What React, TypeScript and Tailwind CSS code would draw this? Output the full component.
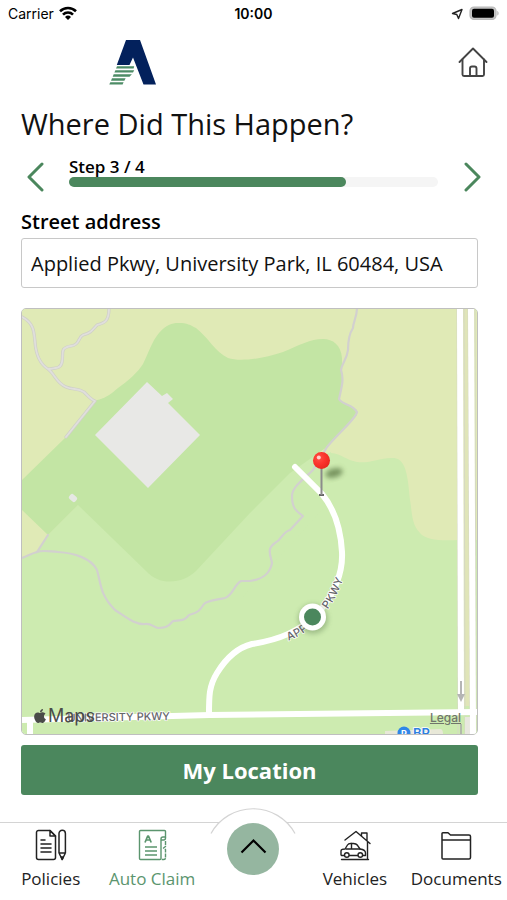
import React from 'react';
import { FaApple } from 'react-icons/fa';

const StatusBar: React.FC = () => {
  return (
    <div className="grid grid-cols-3 items-center h-7 px-2 font-['Inter',sans-serif] text-black">
      <div className="flex items-center gap-1">
        <span className="text-sm leading-5">Carrier</span>
        <svg className="w-5 h-4" viewBox="0 0 20 16" fill="none" stroke="#000" strokeWidth="2.600">
          <path d="M2 5.200a11.500 11.500 0 0 1 16 0" />
          <path d="M5 8.600a7 7 0 0 1 10 0" />
          <path d="M10 14l-3-3a4.300 4.300 0 0 1 6 0z" fill="#000" stroke="none" />
        </svg>
      </div>
      <span className="text-center text-sm leading-5 font-semibold">10:00</span>
      <div className="flex items-center justify-end gap-1">
        <svg className="w-4 h-4" viewBox="0 0 16 16" fill="none" stroke="#222" strokeWidth="1.4" strokeLinejoin="round">
          <path d="M5.500 7.500L15 3.500 11.500 12.500 9.800 8.500z" />
        </svg>
        <svg className="w-8 h-4" viewBox="0 0 32 16">
          <rect x="3" y="1" width="26" height="12.500" rx="4" fill="#c4c4c4" stroke="#b8b8b8" strokeWidth="1.200" />
          <rect x="5" y="2.700" width="22" height="9" rx="2" fill="#000" />
          <path d="M30.300 5c1.700.7 1.700 4 0 4.600z" fill="#b5b5b5" />
        </svg>
      </div>
    </div>
  );
};

const Logo: React.FC = () => {
  return (
    <svg className="w-12 h-12" viewBox="0 0 48 48" role="img" aria-label="Applied">
      <path d="M17 2h14l16 44.500H34.500L24 19.500 20.500 27H7.800z" fill="#03215c" />
      <g fill="#4d8c66">
        <path d="M8 28.200h17.200l-.6 2.200H7z" />
        <path d="M6.400 32.200h18.800l-1.200 2.400H5.400z" />
        <path d="M4.700 36.300h18.200l-2.400 2.400H3.700z" />
        <path d="M3 40.300h13.600l-1.200 2.400H2z" />
        <path d="M1.300 44.200h13.300l-1 2.400H.3z" />
      </g>
    </svg>
  );
};

const Header: React.FC = () => {
  return (
    <header className="flex items-center justify-between h-[68px] pl-[109px] pr-[18px]">
      <Logo />
      <button type="button" aria-label="Home">
        <svg className="w-8 h-8" viewBox="0 0 32 32" fill="none" stroke="#444" strokeWidth="1.900" strokeLinecap="round" strokeLinejoin="round">
          <path d="M2.500 16L16 2.500 29.500 16" />
          <path d="M5.500 13.500V28.500a1.500 1.500 0 0 0 1.500 1.500H25.500a1.500 1.500 0 0 0 1.500-1.500V13.500" />
          <path d="M13 30v-7.500a2 2 0 0 1 2-2h2.500a2 2 0 0 1 2 2V30" />
        </svg>
      </button>
    </header>
  );
};

const StepProgress: React.FC = () => {
  return (
    <div className="flex items-center justify-between -mr-2 pt-4">
      <button type="button" aria-label="Previous step" className="w-7 shrink-0">
        <svg className="w-7 h-8" viewBox="0 0 28 32" fill="none" stroke="#4b875d" strokeWidth="3" strokeLinecap="round" strokeLinejoin="round">
          <path d="M21 4L8 17l13 13" />
        </svg>
      </button>
      <div className="flex-1 ml-5 mr-5 -mt-2">
        <p id="step-label" className="text-[17px] leading-5 font-semibold text-black">Step 3 / 4</p>
        <div
          role="progressbar"
          aria-labelledby="step-label"
          aria-valuenow={3}
          aria-valuemax={4}
          className="h-[10px] rounded-full bg-[#f5f5f5]"
        >
          <div className="h-full w-3/4 rounded-full bg-[#4b875d]" />
        </div>
      </div>
      <button type="button" aria-label="Next step" className="w-7 shrink-0">
        <svg className="w-7 h-8" viewBox="0 0 28 32" fill="none" stroke="#4b875d" strokeWidth="3" strokeLinecap="round" strokeLinejoin="round">
          <path d="M8 4l13 13L8 30" />
        </svg>
      </button>
    </div>
  );
};

const MapView: React.FC = () => {
  return (
    <div className="relative overflow-hidden rounded-[5px] border border-[#bfbfbf]">
      <svg className="block w-full h-auto" viewBox="22 309 455 425" role="img" aria-label="Map of the incident location">
        <defs>
          <path id="applied-pkwy" d="M287 637C306 630 328 612 341 574" />
          <radialGradient id="pin-head" cx="0.35" cy="0.35" r="0.7">
            <stop offset="0" stopColor="#ff5348" />
            <stop offset="0.5" stopColor="#fc352d" />
            <stop offset="1" stopColor="#e8281f" />
          </radialGradient>
          <filter id="soft" x="-50%" y="-50%" width="200%" height="200%">
            <feGaussianBlur stdDeviation="2.500" />
          </filter>
        </defs>

        {/* land */}
        <rect x="22" y="309" width="455" height="425" fill="#cdebb0" />
        <path
          d="M22 309H477V540H458C440 541 426 540 420 533C411 524 412 510 410 500C408 480 407 459 394 458C380 457 370 464 357 462C346 460 342 454 331 453L200 480L22 560Z"
          fill="#e0eab6"
        />
        <path d="M22 559C30 554 34 553 37 552L48 535L78 505L290 473L331 452L331 500L240 600L60 600L22 600Z" fill="#cdebb0" />
        <path
          d="M22 480L66 437L95 401C102 398 104 400 118 388C128 381 138 372 143 364C149 352 152 341 159 333C166 325 172 323 178 323C188 323 190 325 196 328C208 337 215 352 228 358C240 362 262 359 283 352C300 345 310 339 323 339C333 339 341 345 342 358L342 370L343 383L339 400L357 410V415L327 447L290 473L250 513L196 571C184 583 160 587 146 571L78 505L48 535L22 510Z"
          fill="#c3e5a4"
        />

        {/* buildings */}
        <path d="M147 382L162 396L167 393L173 399L168 403L200 435L148 488L95 435Z" fill="#e8e8e6" />
        <rect x="69" y="495" width="8" height="6" rx="2" transform="rotate(42 73 498)" fill="#e6e8e4" />
        <path d="M385 731L440 729Q443 729 443 734H385Z" fill="#e8e8d8" />

        {/* trails */}
        <g fill="none" strokeLinejoin="round" strokeLinecap="round">
          <g stroke="#cfcfc8" strokeWidth="3.200">
            <path d="M22 317C34 323 34 332 35 342C36 356 40 364 48 369C55 374 56 383 66 387C73 390 78 388 84 392C88 396 91 400 95 401L66 437" />
            <path d="M109 308C109 322 104 323 97 325C91 332 90 333 83 335C78 337 80 345 71 346C59 348 64 353 62 362C61 368 57 368 49 369" />
          </g>
          <g stroke="#e0dfdc" strokeWidth="1.800">
            <path d="M22 317C34 323 34 332 35 342C36 356 40 364 48 369C55 374 56 383 66 387C73 390 78 388 84 392C88 396 91 400 95 401L66 437" />
            <path d="M109 308C109 322 104 323 97 325C91 332 90 333 83 335C78 337 80 345 71 346C59 348 64 353 62 362C61 368 57 368 49 369" />
          </g>
          <path
            d="M357 308C357 317 353 322 353 328C349 334 348 341 348 350C347 359 342 363 341 370C344 379 342 386 339 399C342 405 353 404 357 412C356 419 340 431 327 447L313 470C303 480 292 487 292 496C292 510 298 512 303 516L290 530C282 532 282 540 275 543C266 549 271 556 272 563C270 573 264 579 250 581L241 581C234 585 233 595 225 598C216 600 208 600 204 604C200 610 198 613 189 615C184 621 182 620 173 621C168 627 165 628 158 628C153 627 151 623 145 624C135 625 126 617 115 610C100 595 101 584 97 570C91 558 74 553 58 552C46 551 42 550 37 552C30 554 28 556 22 558"
            stroke="#d2d0cf"
            strokeWidth="2.200"
          />
          <path d="M48 535L37 552" stroke="#d2d0cf" strokeWidth="2.200" />
        </g>

        {/* roads */}
        <g fill="none" stroke="#fff">
          <path d="M466 309L467 706" stroke="#e0e5b8" strokeWidth="7" />
          <path d="M457 309L458 734M464 309L465 734M468 309L470 734M475 309L476 734" stroke="#d5d8c4" strokeWidth="1" />
          <path d="M465 717h7v17h-7z" fill="#e8e7df" stroke="none" />
          <path d="M460 309L461 712" strokeWidth="6" />
          <path d="M471 309L473 734" strokeWidth="6" />
          <path d="M22 720L210 715L477 712" strokeWidth="6" />
          <path d="M30 718V734" strokeWidth="6" />
          <path
            d="M209 714C209 696 209 686 217 673C228 655 240 647 252 644C278 640 300 632 320 611C335 592 343 571 342 552C341 534 336 511 322 494L295 467"
            strokeWidth="6"
            strokeLinecap="round"
          />
        </g>
        <path d="M461 681V698" stroke="#b5b5b5" strokeWidth="2" />
        <path d="M457 694H465L461 702Z" fill="#b5b5b5" />
        <path d="M461 724V734" stroke="#a8a8a8" strokeWidth="1.500" />

        {/* road labels */}
        <g fontFamily="Inter, sans-serif" fontSize="11" fontWeight="500" fill="#66666b" stroke="#fff" strokeWidth="1.500" strokeLinejoin="round" paintOrder="stroke">
          <text x="170" y="720" textAnchor="end" transform="rotate(-1 170 720)">UNIVERSITY PKWY</text>
          <text dy="4">
            <textPath href="#applied-pkwy">APPLIED PKWY</textPath>
          </text>
        </g>

        {/* gas station */}
        <circle cx="404" cy="733" r="6.500" fill="#2f86e8" />
        <text x="404" y="737" textAnchor="middle" fontFamily="Inter, sans-serif" fontSize="9" fontWeight="700" fill="#fff">P</text>
        <text x="413" y="738" fontFamily="Inter, sans-serif" fontSize="13" fontWeight="600" fill="#2f7fe0" stroke="#fff" strokeWidth="1.500" paintOrder="stroke">BP</text>

        {/* current position */}
        <circle cx="313" cy="619" r="15" fill="#4b6b40" opacity="0.35" filter="url(#soft)" />
        <circle cx="312.500" cy="617" r="13.500" fill="#fff" />
        <circle cx="312.500" cy="617" r="8.500" fill="#4b875d" />

        {/* dropped pin */}
        <ellipse cx="334" cy="473" rx="9" ry="4.500" transform="rotate(-15 334 473)" fill="#3f5c2c" opacity="0.6" filter="url(#soft)" />
        <path d="M319 495H324" stroke="#666" strokeWidth="2" />
        <path d="M321.500 468V495" stroke="#8b8b8b" strokeWidth="2" />
        <circle cx="321.500" cy="460.500" r="8.500" fill="url(#pin-head)" />
        <circle cx="318.800" cy="457.500" r="2" fill="#ffd0cc" />
      </svg>

      <div className="absolute left-[10px] bottom-2 flex items-center text-[#4a4c48] font-['Inter',sans-serif]">
        <FaApple className="w-4 h-4" />
        <span className="text-lg leading-5">Maps</span>
      </div>
      <a href="#legal" className="absolute right-4 bottom-2 text-xs leading-4 font-medium underline text-[#70756b] font-['Inter',sans-serif]">
        Legal
      </a>
    </div>
  );
};

const PoliciesIcon: React.FC = () => (
  <svg className="w-8 h-8" viewBox="0 0 32 32" fill="none" stroke="currentColor" strokeWidth="1.500" strokeLinejoin="round" strokeLinecap="round">
    <path d="M15 1.500H3.500a2 2 0 0 0-2 2v25a2 2 0 0 0 2 2h15a2 2 0 0 0 2-2V7z" />
    <path d="M15 1.500V7h5.500z" />
    <path d="M6 11h4M6 15h10M6 19h10M6 23h10" />
    <path d="M24 4.500a3.200 3.200 0 0 1 6.400 0V24l-3.200 6.500L24 24zM24 24h6.400" />
    <path d="M26.200 28h2l-1 2.500z" fill="currentColor" />
  </svg>
);

const ClaimIcon: React.FC = () => (
  <svg className="w-8 h-8" viewBox="0 0 32 32" fill="none" stroke="currentColor" strokeWidth="1.400" strokeLinejoin="round">
    <path d="M29.500 8V2.500a1 1 0 0 0-1-1H4.500a1 1 0 0 0-1 1v27a1 1 0 0 0 1 1H24a1 1 0 0 0 1-1V10a2 2 0 0 1 2-2z" />
    <path d="M25 11h2.500a2 2 0 0 0 2-2V8" />
    <path d="M29.500 12v5.500l-2 1.500 2 1.500V29a1.500 1.500 0 0 1-1.500 1.500h-3" strokeDasharray="4 0.8" />
    <path d="M9 18h12M9 22h12M9 26h12" />
    <path d="M9 13.500L11.700 7h.8L15.200 13.500M10.200 11h3.900" strokeWidth="1.700" />
  </svg>
);

const VehiclesIcon: React.FC = () => (
  <svg className="w-8 h-8" viewBox="0 0 32 32" fill="none" stroke="currentColor" strokeWidth="1.400" strokeLinejoin="round" strokeLinecap="round">
    <path d="M6 11L17 2.500 31 14.500M22.500 7V4h5.500v7.500M28.500 13v16.500" />
    <path d="M2.500 30.500h27" />
    <path d="M5 26.500H3a1 1 0 0 1-1-1V22c0-1.500 2-2 4-2l2.500-4c.8-1.300 1.500-1.500 3-1.500h3c2 0 3 .5 4 1.800L21 20c4 .5 5.500 2 5.500 4v2.500H24M10.500 26.500h8" />
    <path d="M7 20h14M12.500 14.500V20" />
    <circle cx="7.800" cy="26" r="2.300" />
    <circle cx="21.300" cy="26" r="2.300" />
  </svg>
);

const DocumentsIcon: React.FC = () => (
  <svg className="w-8 h-8" viewBox="0 0 32 32" fill="none" stroke="currentColor" strokeWidth="1.500" strokeLinejoin="round">
    <path d="M2 29V4.500a.8.8 0 0 1 .8-.8H8L10.500 6H29a1.500 1.500 0 0 1 1.500 1.500V28.500a1.500 1.500 0 0 1-1.500 1.500H3A1 1 0 0 1 2 29z" />
    <path d="M2 11h28.500" />
  </svg>
);

const BottomNav: React.FC = () => {
  const item = 'flex flex-col items-center pt-[6px] text-[17px] leading-6 whitespace-nowrap';

  return (
    <nav className="grid grid-cols-5 h-[78px] border-t border-[#d4d4d4] text-[#222]">
      <a href="#policies" className={item}>
        <PoliciesIcon />
        <span className="mt-[6px]">Policies</span>
      </a>
      <a href="#claim" className={`${item} text-[#5b956e]`}>
        <ClaimIcon />
        <span className="mt-[6px]">Auto Claim</span>
      </a>
      <div className="relative flex justify-center">
        <svg className="absolute -top-4 w-[86px] h-[28px]" viewBox="0 0 86 28" fill="#fff">
          <path d="M1 26.500A48 48 0 0 1 85 26.500" stroke="#d4d4d4" strokeWidth="1.200" />
        </svg>
        <button
          type="button"
          aria-label="Open menu"
          className="relative flex items-center justify-center w-[52px] h-[52px] rounded-full bg-[#95b6a0]"
        >
          <svg className="w-7 h-7" viewBox="0 0 28 28" fill="none" stroke="#000" strokeWidth="2.200">
            <path d="M2.500 17.500L14.500 5.500 26.500 17.500" />
          </svg>
        </button>
      </div>
      <a href="#vehicles" className={item}>
        <VehiclesIcon />
        <span className="mt-[6px]">Vehicles</span>
      </a>
      <a href="#documents" className={item}>
        <DocumentsIcon />
        <span className="mt-[6px]">Documents</span>
      </a>
    </nav>
  );
};

const App: React.FC = () => {
  return (
    <div className="flex flex-col min-h-screen bg-white font-['Open_Sans',sans-serif] text-[#111]">
      <StatusBar />
      <Header />
      <main className="flex-1 pl-[21px] pr-[29px]">
        <h1 className="pt-2 text-[29px] leading-10">Where Did This Happen?</h1>
        <StepProgress />
        <label htmlFor="street" className="block pt-[14px] text-xl leading-8 font-semibold text-black">
          Street address
        </label>
        <input
          id="street"
          type="text"
          defaultValue="Applied Pkwy, University Park, IL 60484, USA"
          className="block w-full h-[50px] px-[9px] border border-[#c8c8c8] rounded-[3px] text-xl"
        />
        <div className="mt-5">
          <MapView />
        </div>
        <button type="button" className="w-full h-[50px] mt-[10px] rounded-[3px] bg-[#4b875d] text-white text-[22px] font-bold">
          My Location
        </button>
      </main>
      <BottomNav />
    </div>
  );
};

export default App;
